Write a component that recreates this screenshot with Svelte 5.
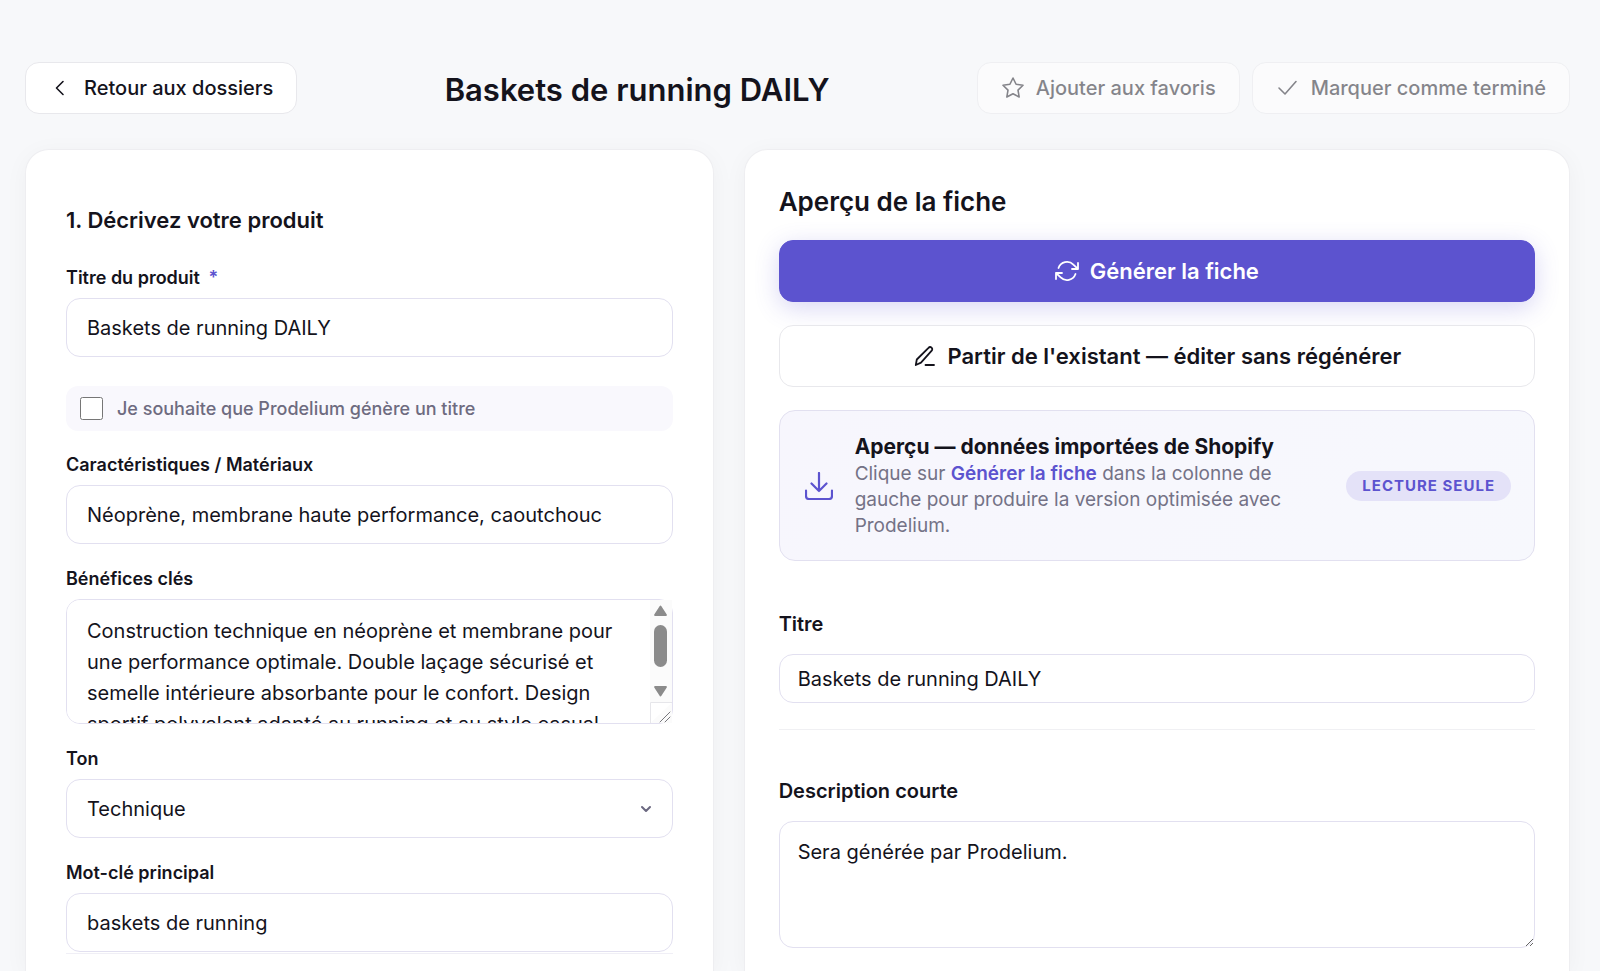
<script>
    let title = $state('Baskets de running DAILY')
    let autoTitle = $state(false)
    let materials = $state('Néoprène, membrane haute performance, caoutchouc')
    let benefits = $state('Construction technique en néoprène et membrane pour une performance optimale. Double laçage sécurisé et semelle intérieure absorbante pour le confort. Design sportif polyvalent adapté au running et au style casual.')
    let tone = $state('Technique')
    let keyword = $state('baskets de running')

    let previewTitle = $state('Baskets de running DAILY')
    let shortDescription = $state('Sera générée par Prodelium.')

    const tones = ['Technique', 'Premium', 'Décontracté']
</script>

<div class="page">

    <header>
        <button class="pill">
            <svg class="ico" viewBox="0 0 24 24"><path d="M14 5.500 7.500 12l6.500 6.500" /></svg>
            Retour aux dossiers
        </button>
        <h1>Baskets de running DAILY</h1>
        <div class="actions">
            <button class="pill" disabled>
                <svg class="ico" viewBox="0 0 24 24"><path d="m12 2 3.090 6.260L22 9.270l-5 4.870 1.180 6.880L12 17.770l-6.180 3.250L7 14.140 2 9.270l6.910-1.010z" /></svg>
                Ajouter aux favoris
            </button>
            <button class="pill" disabled>
                <svg class="ico" viewBox="0 0 24 24"><path d="M20 5.500 9 18l-6-6" /></svg>
                Marquer comme terminé
            </button>
        </div>
    </header>

    <main>
        <form class="card describe" onsubmit={(e) => e.preventDefault()}>
            <h2>1. Décrivez votre produit</h2>

            <div class="field">
                <label for="title">Titre du produit <span class="required">*</span></label>
                <input id="title" type="text" bind:value={title}>
            </div>

            <label class="check">
                <input type="checkbox" bind:checked={autoTitle}>
                Je souhaite que Prodelium génère un titre
            </label>

            <div class="field">
                <label for="materials">Caractéristiques / Matériaux</label>
                <input id="materials" type="text" bind:value={materials}>
            </div>

            <div class="field">
                <label for="benefits">Bénéfices clés</label>
                <div class="scroller">
                    <textarea id="benefits" bind:value={benefits}></textarea>
                    <svg class="bar" viewBox="0 0 22 123" aria-hidden="true">
                        <rect class="track" width="22" height="123" />
                        <path class="thumb" d="M10.500 6.500 5 15h11zM5 87h11l-5.500 8.500z" />
                        <rect class="thumb" x="4" y="25" width="13" height="42" rx="6.500" />
                        <path class="corner" d="M.5 123v-20.500H22" />
                        <path class="grip" d="m10 122 10-10M15 122l5-5" />
                    </svg>
                </div>
            </div>

            <div class="field">
                <label for="tone">Ton</label>
                <select id="tone" bind:value={tone}>
                    {#each tones as t}
                        <option>{t}</option>
                    {/each}
                </select>
            </div>

            <div class="field last">
                <label for="keyword">Mot-clé principal</label>
                <input id="keyword" type="text" bind:value={keyword}>
            </div>
        </form>

        <section class="card preview">
            <h2>Aperçu de la fiche</h2>

            <button class="big primary">
                <svg class="ico" viewBox="0 0 24 24"><path d="M23 4v6h-6M1 20v-6h6M3.510 9a9 9 0 0 1 14.850-3.360L23 10M1 14l4.640 4.360A9 9 0 0 0 20.490 15" /></svg>
                Générer la fiche
            </button>
            <button class="big">
                <svg class="ico" viewBox="0 0 24 24"><path d="M13.500 21H22M16.500 3.800a2.100 2.100 0 0 1 3.200 2.900L9 18.600 3.800 21l1-5.500z" /></svg>
                Partir de l'existant — éditer sans régénérer
            </button>

            <div class="notice">
                <svg class="import" viewBox="0 0 28 28"><path d="M14 1v18M6.500 11.500 14 19l7.500-7.500M1 18.500V24a3 3 0 0 0 3 3h20a3 3 0 0 0 3-3v-5.500" /></svg>
                <div class="notice-text">
                    <strong>Aperçu — données importées de Shopify</strong>
                    <p>Clique sur <b>Générer la fiche</b> dans la colonne de gauche pour produire la version optimisée avec Prodelium.</p>
                </div>
                <span class="badge">LECTURE SEULE</span>
            </div>

            <div class="block">
                <label for="preview-title">Titre</label>
                <input id="preview-title" type="text" bind:value={previewTitle}>
            </div>
            <div class="block">
                <label for="short">Description courte</label>
                <textarea id="short" bind:value={shortDescription}></textarea>
            </div>
        </section>
    </main>

</div>

<style>
    :global(body) {
        margin: 0;
        background: #f7f8fa;
    }

    .page {
        box-sizing: border-box;
        min-height: 100vh;
        padding: 62px 30px 0 25px;
        display: flex;
        flex-direction: column;
        color: #14131c;
        font-family: Inter, sans-serif;
        font-size: 20px;
    }

    .page * {
        box-sizing: border-box;
    }

    header {
        display: flex;
        align-items: center;
        justify-content: space-between;
        margin-bottom: 35px;
    }

    h1, h2 {
        margin: 0;
        font-weight: 600;
    }

    h1 {
        padding-top: 4px;
        font-size: 31px;
        line-height: 40px;
    }

    button {
        display: flex;
        align-items: center;
        justify-content: center;
        font-family: inherit;
        color: inherit;
        background: #fff;
        border: 1px solid #e8e8ec;
        cursor: pointer;
    }

    .actions {
        display: flex;
        gap: 12px;
    }

    .pill {
        height: 52px;
        padding: 0 23px;
        gap: 11px;
        border-radius: 14px;
        font-size: 20px;
        font-weight: 500;
    }

    .pill:disabled {
        opacity: 0.5;
        cursor: default;
    }

    .ico {
        width: 24px;
        height: 24px;
    }

    svg {
        flex: none;
        fill: none;
        stroke: currentColor;
        stroke-width: 1.800;
        stroke-linecap: round;
        stroke-linejoin: round;
    }

    .pill svg {
        stroke-width: 1.600;
    }

    main {
        flex: 1;
        display: grid;
        grid-template-columns: 5fr 6fr;
        gap: 30px;
    }

    .card {
        min-width: 0;
        background: #fff;
        border: 1px solid #eeeef1;
        border-bottom: 0;
        border-radius: 24px 24px 0 0;
        box-shadow: 0 4px 24px rgba(20, 20, 40, 0.04);
    }

    .describe {
        padding: 54px 40px 16px;
    }

    .describe h2 {
        font-size: 22px;
        line-height: 32px;
        margin-bottom: 29px;
    }

    .field {
        margin-bottom: 22px;
    }

    .field label, .block label {
        display: block;
        font-weight: 600;
    }

    .field label {
        font-size: 18px;
        line-height: 26px;
        margin-bottom: 7px;
    }

    .required {
        margin-left: 4px;
        color: #5c53cf;
    }

    input[type='text'], textarea, select {
        display: block;
        width: 100%;
        margin: 0;
        font-family: inherit;
        color: inherit;
        background: #fff;
        border: 1px solid #e2e0f0;
        border-radius: 14px;
    }

    .field input, .field select {
        height: 59px;
        padding: 0 20px;
        font-size: 20px;
    }

    .field select {
        appearance: none;
        background: #fff url("data:image/svg+xml,%3Csvg xmlns='http://www.w3.org/2000/svg' width='14' height='14' fill='none' stroke='%236b6880' stroke-width='2' stroke-linecap='round' stroke-linejoin='round'%3E%3Cpath d='M3 5l4 4 4-4'/%3E%3C/svg%3E") no-repeat right 19px center;
    }

    .scroller {
        position: relative;
    }

    .scroller textarea {
        height: 125px;
        padding: 16px 42px 16px 20px;
        font-size: 20px;
        line-height: 31px;
        resize: none;
        scrollbar-width: none;
    }

    .bar {
        position: absolute;
        top: 1px;
        right: 1px;
        width: 22px;
        height: 123px;
        pointer-events: none;
    }

    .track {
        fill: #fbfbfb;
        stroke: none;
    }

    .thumb {
        fill: #8b8b8b;
        stroke: none;
    }

    path.thumb {
        stroke: #8b8b8b;
    }

    .corner {
        fill: #fff;
        stroke: #e6e6ea;
        stroke-width: 1;
    }

    .grip {
        stroke: #77777c;
        stroke-width: 1;
    }

    .check {
        display: flex;
        align-items: center;
        gap: 14px;
        height: 45px;
        margin: 29px 0 21px;
        padding: 0 14px;
        border-radius: 12px;
        background: #f9f8fd;
        color: #6e6b80;
        font-size: 18px;
        font-weight: 500;
    }

    .check input {
        width: 23px;
        height: 23px;
        margin: 0;
    }

    .last {
        margin-bottom: 0;
        border-bottom: 1px solid #f0eff6;
        padding-bottom: 1px;
    }

    .preview {
        padding: 36px 34px 23px;
    }

    .preview h2 {
        font-size: 26px;
        line-height: 32px;
        margin-bottom: 22px;
    }

    .big {
        width: 100%;
        height: 62px;
        gap: 11px;
        margin-bottom: 23px;
        border-radius: 14px;
        font-size: 22px;
        font-weight: 600;
    }

    .primary {
        color: #fff;
        background: #5c53cf;
        border-color: #5c53cf;
        box-shadow: 0 6px 24px rgba(92, 83, 207, 0.24);
    }

    .notice {
        display: flex;
        align-items: center;
        gap: 22px;
        margin-bottom: 2px;
        padding: 21px 23px;
        border: 1px solid #e2e0f0;
        border-radius: 16px;
        background: linear-gradient(135deg, #f7f6fd, #f7f8fd);
    }

    .import {
        width: 28px;
        height: 28px;
        margin-left: 2px;
        color: #5c53cf;
        stroke-width: 2.200;
    }

    .notice-text {
        flex: 1;
        padding-right: 40px;
    }

    .notice strong {
        display: block;
        font-size: 21px;
        font-weight: 700;
        line-height: 29px;
    }

    .notice p {
        margin: 0;
        color: #747286;
        font-size: 19px;
        line-height: 26px;
    }

    .notice b {
        color: #5c53cf;
        font-weight: 600;
    }

    .badge {
        padding: 0 16px;
        border-radius: 15px;
        background: #e4e2f8;
        color: #5c53cf;
        font-size: 15px;
        font-weight: 700;
        line-height: 30px;
        letter-spacing: 1px;
        white-space: nowrap;
    }

    .block {
        padding: 47px 0 26px;
        border-bottom: 1px solid #f0f0f3;
    }

    .block:last-child {
        border-bottom: 0;
        padding-bottom: 0;
    }

    .block label {
        font-size: 20px;
        line-height: 28px;
        margin-bottom: 16px;
    }

    .block input, .block textarea {
        padding: 0 18px;
        font-size: 20px;
    }

    .block input {
        height: 49px;
    }

    .block textarea {
        height: 127px;
        padding: 15px 18px;
        line-height: 30px;
    }
</style>
